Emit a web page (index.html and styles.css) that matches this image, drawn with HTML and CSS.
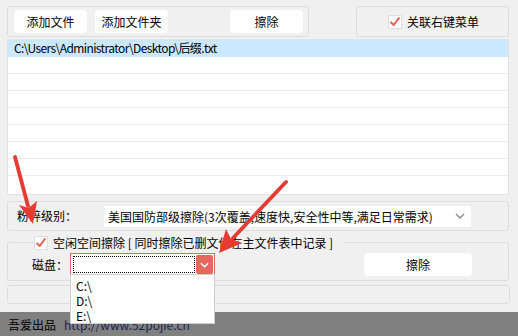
FILE: index.html
```html
<!DOCTYPE html>
<html lang="zh-CN">
<head>
    <meta charset="UTF-8">
    <title>文件粉碎</title>
    <link rel="stylesheet" href="styles.css">
</head>
<body>

    <div class="main">

        <!-- Top buttons -->
        <div class="top-row">
            <div class="group btn-group">
                <button class="btn">添加文件</button>
                <button class="btn">添加文件夹</button>
                <button class="btn btn-right">擦除</button>
            </div>
            <div class="group menu-group">
                <span class="check"><svg viewBox="0 0 14 14" width="12" height="12"><path d="M2.5 7.5 L5.5 10.5 L11.5 2.5" fill="none" stroke="#e4675c" stroke-width="2.4" stroke-linecap="round" stroke-linejoin="round"/></svg></span>
                <span class="label">关联右键菜单</span>
            </div>
        </div>

        <!-- File list -->
        <div class="file-list">
            <div class="row selected">C:\Users\Administrator\Desktop\后缀.txt</div>
            <div class="row"></div>
            <div class="row"></div>
            <div class="row"></div>
            <div class="row"></div>
            <div class="row"></div>
            <div class="row"></div>
            <div class="row"></div>
            <div class="row last"></div>
        </div>

        <!-- Level -->
        <div class="group level-group">
            <span class="label level-label">粉碎级别：</span>
            <div class="select">
                <span>美国国防部级擦除(3次覆盖,速度快,安全性中等,满足日常需求)</span>
                <svg class="chev" viewBox="0 0 10 6" width="10" height="6"><path d="M1 1 L5 5 L9 1" fill="none" stroke="#8a8a8a" stroke-width="1.4"/></svg>
            </div>
        </div>

        <!-- Free space -->
        <div class="group free-group">
            <div class="caption">
                <span class="check"><svg viewBox="0 0 14 14" width="12" height="12"><path d="M2.5 7.5 L5.5 10.5 L11.5 2.5" fill="none" stroke="#e4675c" stroke-width="2.4" stroke-linecap="round" stroke-linejoin="round"/></svg></span>
                <span class="label">空闲空间擦除 [ 同时擦除已删文件在主文件表中记录 ]</span>
            </div>
            <div class="disk-row">
                <span class="label disk-label">磁盘：</span>
                <div class="combo">
                    <div class="combo-field"></div>
                    <div class="combo-btn"><svg viewBox="0 0 10 6" width="9" height="6"><path d="M1 1 L5 5 L9 1" fill="none" stroke="#fff" stroke-width="1.6"/></svg></div>
                </div>
                <button class="btn btn-wide">擦除</button>
            </div>
        </div>

        <div class="group empty-group"></div>
    </div>

    <!-- Status bar -->
    <div class="status">
        <span>吾爱出品</span>
        <span class="link">http://www.52pojie.cn</span>
    </div>

    <!-- Open drop-down -->
    <div class="dropdown">
        <div class="item">C:\</div>
        <div class="item">D:\</div>
        <div class="item">E:\</div>
    </div>

    <!-- Red arrows -->
    <svg class="arrows" width="518" height="336" viewBox="0 0 518 336">
        <line x1="15" y1="157" x2="28" y2="206" stroke="#e63a33" stroke-width="3.8" stroke-linecap="round"/>
        <polygon points="33,224 19,205 28.5,208 37,201" fill="#e63a33"/>
        <line x1="286" y1="182" x2="233" y2="238" stroke="#e63a33" stroke-width="3.8" stroke-linecap="round"/>
        <polygon points="219,253 226,229 231,239 242,243" fill="#e63a33"/>
    </svg>

</body>
</html>
```

FILE: styles.css
```css
* {
    margin: 0;
    padding: 0;
    box-sizing: border-box;
    font-family: "Noto Sans CJK SC", "Noto Sans", sans-serif;
}

body {
    width: 518px;
    height: 336px;
    overflow: hidden;
    position: relative;
    background: #f0f0f0;
    color: #000;
    font-size: 12px;
}

.main {
    padding: 6px 9px 0 7px;
    height: 312px;
}

/* Group boxes */
.group {
    border: 1px solid #dcdcdc;
    border-radius: 3px;
}

.label {
    line-height: 16px;
    white-space: nowrap;
}

.top-row {
    display: flex;
    height: 31px;
}

.btn-group {
    width: 302px;
    display: flex;
    align-items: flex-start;
    gap: 8px;
    padding: 3px 5px 0 6px;
}

.btn {
    width: 73px;
    height: 23px;
    background: #fff;
    border: none;
    border-radius: 4px;
    font-size: 12px;
    line-height: 23px;
    color: #000;
}

.btn-right {
    margin-left: auto;
}

.menu-group {
    margin-left: auto;
    width: 153px;
    display: flex;
    align-items: center;
    justify-content: center;
    gap: 5px;
    padding-left: 2px;
}

.check {
    width: 14px;
    height: 14px;
    background: #fff;
    border: 1px solid #dedede;
    display: flex;
    align-items: center;
    justify-content: center;
    flex-shrink: 0;
}

/* File list */
.file-list {
    margin-top: 2px;
    height: 156px;
    background: #fff;
    border: 1px solid #e2e2e2;
}

.row {
    height: 17px;
    border-bottom: 1px solid #ebebeb;
    padding-left: 6px;
    line-height: 16px;
    white-space: nowrap;
    letter-spacing: -0.6px;
}

.row.selected {
    background: #cce8ff;
    border-bottom-color: #cce8ff;
}

.row.last {
    border-bottom: none;
}

/* Level group */
.level-group {
    margin-top: 6px;
    height: 30px;
    display: flex;
    align-items: center;
    padding-left: 9px;
}

.level-label {
    width: 87px;
}

.select {
    width: 367px;
    height: 21px;
    background: #fff;
    display: flex;
    align-items: center;
    padding: 0 6px 0 4px;
    white-space: nowrap;
}

.select span {
    flex: 1;
}

/* Free space group */
.free-group {
    margin-top: 11px;
    height: 39px;
}

.caption {
    display: flex;
    align-items: center;
    gap: 5px;
    margin: -8px 0 0 26px;
    width: 310px;
    background: #f0f0f0;
}

.disk-row {
    display: flex;
    align-items: center;
    margin-top: 2px;
    padding-left: 24px;
}

.disk-label {
    width: 38px;
}

.combo {
    width: 145px;
    height: 23px;
    border: 1px solid #e6695e;
    background: #fff;
    display: flex;
    align-items: center;
    padding: 0 1px 0 2px;
    gap: 1px;
}

.combo-field {
    flex: 1;
    height: 17px;
    border: 1px dotted #000;
}

.combo-btn {
    width: 17px;
    height: 19px;
    background: #e5685d;
    border-radius: 2px;
    display: flex;
    align-items: center;
    justify-content: center;
}

.btn-wide {
    width: 108px;
    margin-left: 149px;
    margin-top: -1px;
}

.empty-group {
    margin-top: 4px;
    height: 19px;
    width: 503px;
}

/* Status bar */
.status {
    height: 24px;
    background: #808080;
    display: flex;
    align-items: center;
    gap: 8px;
    padding-left: 8px;
    font-size: 12px;
}

.status .link {
    color: #1b2752;
}

/* Drop-down list, open over the page */
.dropdown {
    position: absolute;
    left: 70px;
    top: 274px;
    width: 145px;
    height: 50px;
    background: #fff;
    border: 1px solid #cfcfcf;
    padding-top: 3px;
}

.dropdown .item {
    height: 15px;
    line-height: 15px;
    padding-left: 5px;
}

.arrows {
    position: absolute;
    left: 0;
    top: 0;
    pointer-events: none;
}
```
